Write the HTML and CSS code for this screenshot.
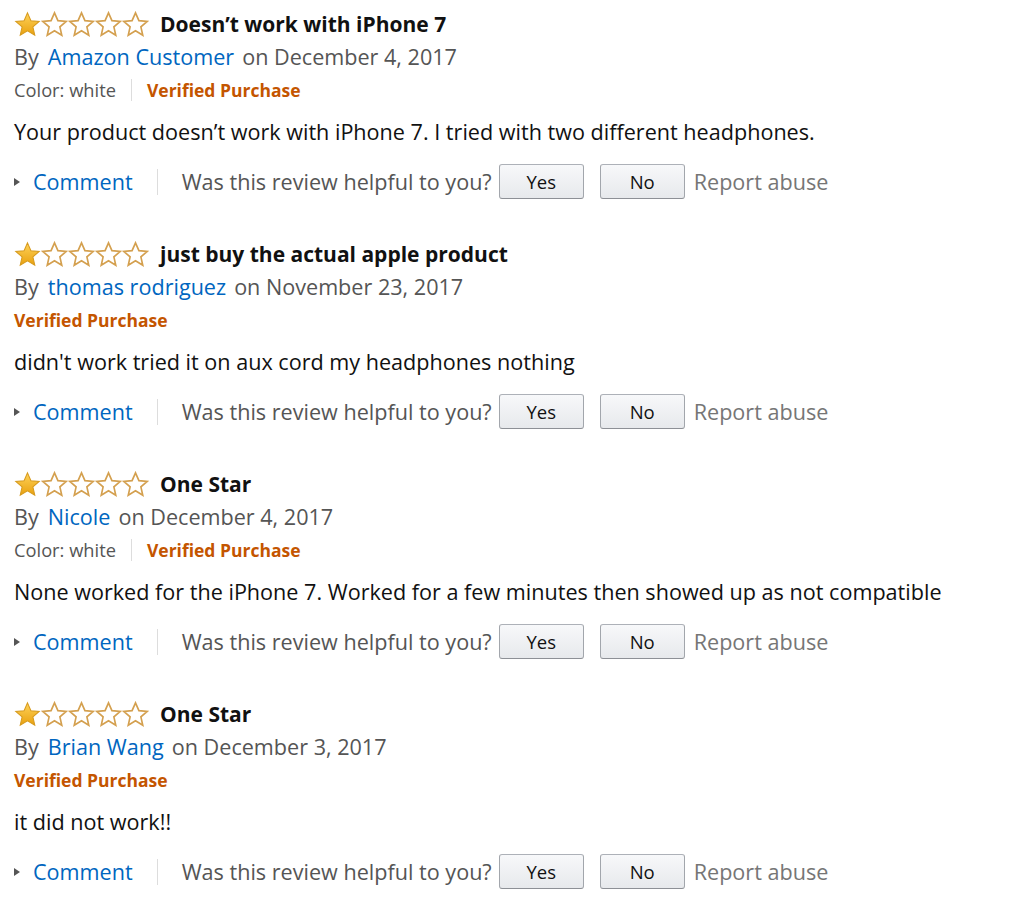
FILE: index.html
```html
<!DOCTYPE html>
<html>
<head>
<meta charset="utf-8">
<link rel="stylesheet" href="styles.css">
</head>
<body>
<svg width="0" height="0" class="defs">
  <defs>
    <linearGradient id="gold" x1="0" y1="0" x2="0" y2="1">
      <stop offset="0" stop-color="#ffd35a"/>
      <stop offset="1" stop-color="#e8a10f"/>
    </linearGradient>
    <symbol id="star" viewBox="0 0 26 26">
      <polygon points="13,1.8 16.3,9.3 24.3,10 18.2,15.3 20,23.3 13,19.1 6,23.3 7.8,15.3 1.7,10 9.7,9.3"/>
    </symbol>
  </defs>
</svg>
<div class="reviews">
  <div class="review">
    <div class="title-row">
      <span class="stars"><svg class="star full"><use href="#star"/></svg><svg class="star"><use href="#star"/></svg><svg class="star"><use href="#star"/></svg><svg class="star"><use href="#star"/></svg><svg class="star"><use href="#star"/></svg></span>
      <span class="title">Doesn’t work with iPhone 7</span>
    </div>
    <div class="byline"><span>By</span><a class="author">Amazon Customer</a><span>on December 4, 2017</span></div>
    <div class="meta"><span class="color">Color: white</span><span class="sep"></span><span class="verified">Verified Purchase</span></div>
    <div class="body">Your product doesn’t work with iPhone 7. I tried with two different headphones.</div>
    <div class="actions">
      <span class="tri"></span><a class="comment">Comment</a><span class="vsep"></span>
      <span class="helpful">Was this review helpful to you?</span>
      <button class="btn">Yes</button><button class="btn">No</button>
      <span class="report">Report abuse</span>
    </div>
  </div>
  <div class="review">
    <div class="title-row">
      <span class="stars"><svg class="star full"><use href="#star"/></svg><svg class="star"><use href="#star"/></svg><svg class="star"><use href="#star"/></svg><svg class="star"><use href="#star"/></svg><svg class="star"><use href="#star"/></svg></span>
      <span class="title">just buy the actual apple product</span>
    </div>
    <div class="byline"><span>By</span><a class="author">thomas rodriguez</a><span>on November 23, 2017</span></div>
    <div class="meta"><span class="verified">Verified Purchase</span></div>
    <div class="body">didn't work tried it on aux cord my headphones nothing</div>
    <div class="actions">
      <span class="tri"></span><a class="comment">Comment</a><span class="vsep"></span>
      <span class="helpful">Was this review helpful to you?</span>
      <button class="btn">Yes</button><button class="btn">No</button>
      <span class="report">Report abuse</span>
    </div>
  </div>
  <div class="review">
    <div class="title-row">
      <span class="stars"><svg class="star full"><use href="#star"/></svg><svg class="star"><use href="#star"/></svg><svg class="star"><use href="#star"/></svg><svg class="star"><use href="#star"/></svg><svg class="star"><use href="#star"/></svg></span>
      <span class="title">One Star</span>
    </div>
    <div class="byline"><span>By</span><a class="author">Nicole</a><span>on December 4, 2017</span></div>
    <div class="meta"><span class="color">Color: white</span><span class="sep"></span><span class="verified">Verified Purchase</span></div>
    <div class="body">None worked for the iPhone 7. Worked for a few minutes then showed up as not compatible</div>
    <div class="actions">
      <span class="tri"></span><a class="comment">Comment</a><span class="vsep"></span>
      <span class="helpful">Was this review helpful to you?</span>
      <button class="btn">Yes</button><button class="btn">No</button>
      <span class="report">Report abuse</span>
    </div>
  </div>
  <div class="review">
    <div class="title-row">
      <span class="stars"><svg class="star full"><use href="#star"/></svg><svg class="star"><use href="#star"/></svg><svg class="star"><use href="#star"/></svg><svg class="star"><use href="#star"/></svg><svg class="star"><use href="#star"/></svg></span>
      <span class="title">One Star</span>
    </div>
    <div class="byline"><span>By</span><a class="author">Brian Wang</a><span>on December 3, 2017</span></div>
    <div class="meta"><span class="verified">Verified Purchase</span></div>
    <div class="body">it did not work!!</div>
    <div class="actions">
      <span class="tri"></span><a class="comment">Comment</a><span class="vsep"></span>
      <span class="helpful">Was this review helpful to you?</span>
      <button class="btn">Yes</button><button class="btn">No</button>
      <span class="report">Report abuse</span>
    </div>
  </div>
</div>
</body>
</html>
```

FILE: styles.css
```css
* { box-sizing: border-box; }
html, body { margin: 0; padding: 0; background: #fff; }
body {
  font-family: "Open Sans", "Liberation Sans", sans-serif;
  color: #111;
  font-size: 21.6px;
}
.defs { position: absolute; width: 0; height: 0; }
.reviews { padding: 8px 0 0 14px; }
.review { height: 230px; }
.title-row { height: 32px; display: flex; align-items: center; }
.stars { display: flex; margin-right: 11px; }
.star { width: 27px; height: 27px; fill: #fff; stroke: #d4a04f; stroke-width: 1.6; }
.star.full { fill: url(#gold); stroke: #d69a1e; stroke-width: 1; }
.title { font-weight: 700; font-size: 21px; color: #111; }
.byline { height: 33px; display: flex; align-items: center; color: #555; white-space: nowrap; }
.author { color: #0066c0; margin: 0 8px 0 9px; }
.meta { height: 33px; display: flex; align-items: center; font-size: 18.3px; }
.color { color: #555; }
.sep { width: 1px; height: 22px; background: #ddd; margin: 0 15px; }
.verified { color: #c45500; font-weight: 700; font-size: 17.5px; }
.body { margin-top: 10px; height: 32px; line-height: 32px; white-space: nowrap; }
.actions { margin-top: 16px; height: 35px; display: flex; align-items: center; }
.tri { width: 0; height: 0; border-left: 6px solid #555; border-top: 4.5px solid transparent; border-bottom: 4.5px solid transparent; margin-right: 13px; }
.comment { color: #0066c0; }
.vsep { width: 1px; height: 26px; background: #ddd; margin: 0 24px; }
.helpful { color: #555; margin-right: 7px; white-space: nowrap; }
.btn {
  width: 85px; height: 35px;
  font-family: inherit; font-size: 18.5px; color: #111;
  border: 1px solid #adb1b8; border-color: #adb1b8 #a2a6ac #8d9096;
  border-radius: 3px;
  background: linear-gradient(to bottom, #f7f8fa, #e7e9ec);
  margin-right: 16px;
  padding: 0;
}
.btn + .btn { margin-right: 9px; }
.report { color: #767676; white-space: nowrap; }
```
